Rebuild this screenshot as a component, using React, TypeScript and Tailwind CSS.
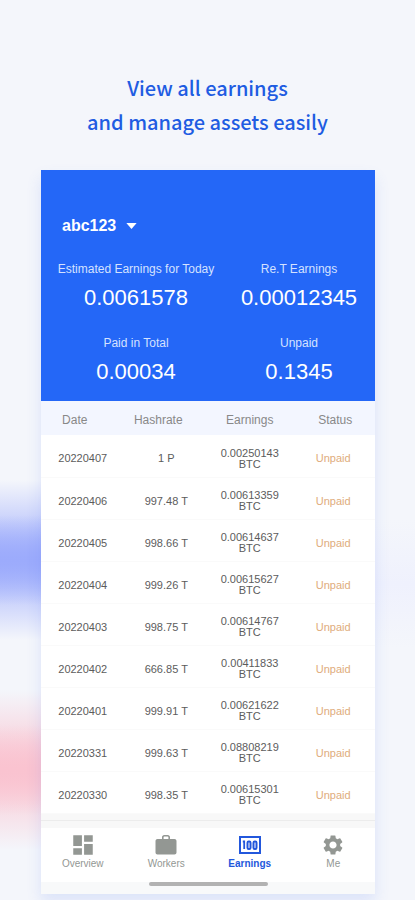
import React, { useState } from 'react';
import { MdDashboard, MdSettings } from 'react-icons/md';

interface Earning {
    date: string;
    hashrate: string;
    amount: string;
}

const earnings: Earning[] = [
    { date: '20220407', hashrate: '1 P', amount: '0.00250143' },
    { date: '20220406', hashrate: '997.48 T', amount: '0.00613359' },
    { date: '20220405', hashrate: '998.66 T', amount: '0.00614637' },
    { date: '20220404', hashrate: '999.26 T', amount: '0.00615627' },
    { date: '20220403', hashrate: '998.75 T', amount: '0.00614767' },
    { date: '20220402', hashrate: '666.85 T', amount: '0.00411833' },
    { date: '20220401', hashrate: '999.91 T', amount: '0.00621622' },
    { date: '20220331', hashrate: '999.63 T', amount: '0.08808219' },
    { date: '20220330', hashrate: '998.35 T', amount: '0.00615301' },
];

const WorkersIcon: React.FC = () => (
    <svg viewBox="0 0 22 20" className="h-5 w-[22px]" fill="currentColor" aria-hidden="true">
        <path
            fillRule="evenodd"
            d="M7 4V2.2C7 1 8 0 9.200 0h3.600C14 0 15 1 15 2.200V4h4.500c1.100 0 2 .9 2 2v11.500c0 1.100-.9 2-2 2h-17c-1.100 0-2-.9-2-2V6c0-1.100.9-2 2-2H7zm1.600 0h4.800V2.300c0-.4-.3-.7-.7-.7H9.300c-.4 0-.7.3-.7.7V4z"
        />
    </svg>
);

const EarningsIcon: React.FC = () => (
    <svg viewBox="0 0 22 18" className="h-[18px] w-[22px]" fill="none" stroke="currentColor" aria-hidden="true">
        <rect x="1" y="1" width="20" height="16" strokeWidth="2" />
        <path d="M3.800 5.500h1.400v7.500" strokeWidth="1.800" />
        <rect x="8.500" y="5.500" width="3" height="7.500" rx="1.200" strokeWidth="2" />
        <rect x="14.500" y="5.500" width="3" height="7.500" rx="1.200" strokeWidth="2" />
    </svg>
);

const tabs = [
    { name: 'Overview', icon: <MdDashboard size={26} /> },
    { name: 'Workers', icon: <WorkersIcon /> },
    { name: 'Earnings', icon: <EarningsIcon /> },
    { name: 'Me', icon: <MdSettings size={24} /> },
];

const Stat: React.FC<{ label: string; value: string }> = ({ label, value }) => (
    <div className="flex flex-col items-center whitespace-nowrap">
        <dt className="text-xs text-[#d5e2ff]">{label}</dt>
        <dd className="mt-1 text-[22px] leading-[34px] text-white">{value}</dd>
    </div>
);

const App: React.FC = () => {
    const [tab, setTab] = useState('Earnings');

    return (
        <div className="relative isolate min-h-screen overflow-hidden bg-[#f4f6fb] pt-[71px] font-['Liberation_Sans',Arial,sans-serif]">
            {/* Coloured glows behind the card */}
            <div className="absolute top-[480px] left-0 -z-10 h-40 w-1/2 bg-linear-to-b from-transparent via-[#a0aefc] via-50% to-transparent" />
            <div className="absolute top-[515px] left-0 -z-10 h-[90px] w-1/2 bg-linear-to-b from-transparent via-[#9cabfc] via-50% to-transparent" />
            <div className="absolute top-[690px] left-0 -z-10 h-40 w-1/2 bg-linear-to-b from-transparent via-[#fac5d1] via-50% to-transparent" />
            <div className="absolute top-[725px] left-0 -z-10 h-[90px] w-1/2 bg-linear-to-b from-transparent via-[#fac3d0] via-50% to-transparent" />
            <div className="absolute top-[520px] right-0 -z-10 h-32 w-1/3 bg-linear-to-b from-transparent via-[#eff1fd] via-50% to-transparent" />

            <h1 className="text-center font-['Noto_Sans_CJK_SC',sans-serif] text-xl leading-[34px] font-medium text-[#1f5ce2]">
                View all earnings
                <br />
                and manage assets easily
            </h1>

            <main className="mt-[31px] mr-10 mb-[6px] ml-[41px] bg-white shadow-[0_8px_14px_rgba(70,110,240,0.14)]">
                <header className="bg-[#2467f7] pt-11 pb-3">
                    <button type="button" className="ml-[21px] flex items-center gap-[10px] text-base leading-6 font-bold text-white">
                        abc123
                        <svg viewBox="0 0 12 7" className="h-[6px] w-[11px]" fill="currentColor" aria-hidden="true">
                            <path d="M0 0h12L6 7z" />
                        </svg>
                    </button>
                    <dl className="mt-[23px] grid grid-cols-[190fr_136fr] gap-y-5 pr-2">
                        <Stat label="Estimated Earnings for Today" value="0.0061578" />
                        <Stat label="Re.T Earnings" value="0.00012345" />
                        <Stat label="Paid in Total" value="0.00034" />
                        <Stat label="Unpaid" value="0.1345" />
                    </dl>
                </header>

                <table className="w-full table-fixed border-collapse text-center text-[11px] leading-[11px] text-[#5c5c5c]">
                    <thead className="bg-[#f3f6ff] text-xs text-[#888]">
                        <tr className="h-[34px]">
                            <th className="pt-1 pr-4 font-normal">Date</th>
                            <th className="pt-1 pr-4 font-normal">Hashrate</th>
                            <th className="pt-1 font-normal">Earnings</th>
                            <th className="pt-1 pl-1 font-normal">Status</th>
                        </tr>
                    </thead>
                    <tbody>
                        {earnings.map((row) => (
                            <tr key={row.date} className="h-[42px] border-b border-[#fafafa] *:pt-[6px]">
                                <td>{row.date}</td>
                                <td>{row.hashrate}</td>
                                <td>
                                    {row.amount}
                                    <br />
                                    BTC
                                </td>
                                <td className="text-[#e0ac7c]">Unpaid</td>
                            </tr>
                        ))}
                    </tbody>
                </table>

                <div className="flex h-[14px] items-center bg-[#f8f8f8]">
                    <div className="h-px w-full bg-[#ececec]" />
                </div>

                <nav className="grid h-[54px] grid-cols-4 pt-1">
                    {tabs.map(({ name, icon }) => (
                        <button
                            key={name}
                            type="button"
                            onClick={() => setTab(name)}
                            className={`flex flex-col items-center text-[10px] leading-3 ${
                                tab === name ? 'font-bold text-[#2257dc]' : 'text-[#939793]'
                            }`}
                        >
                            <span className="flex h-[26px] items-center">{icon}</span>
                            {name}
                        </button>
                    ))}
                </nav>
                <div className="flex h-3 justify-center bg-[#f8f9fa]">
                    <div className="h-1 w-[119px] rounded-full bg-[#b2b2b2]" />
                </div>
            </main>
        </div>
    );
};

export default App;
